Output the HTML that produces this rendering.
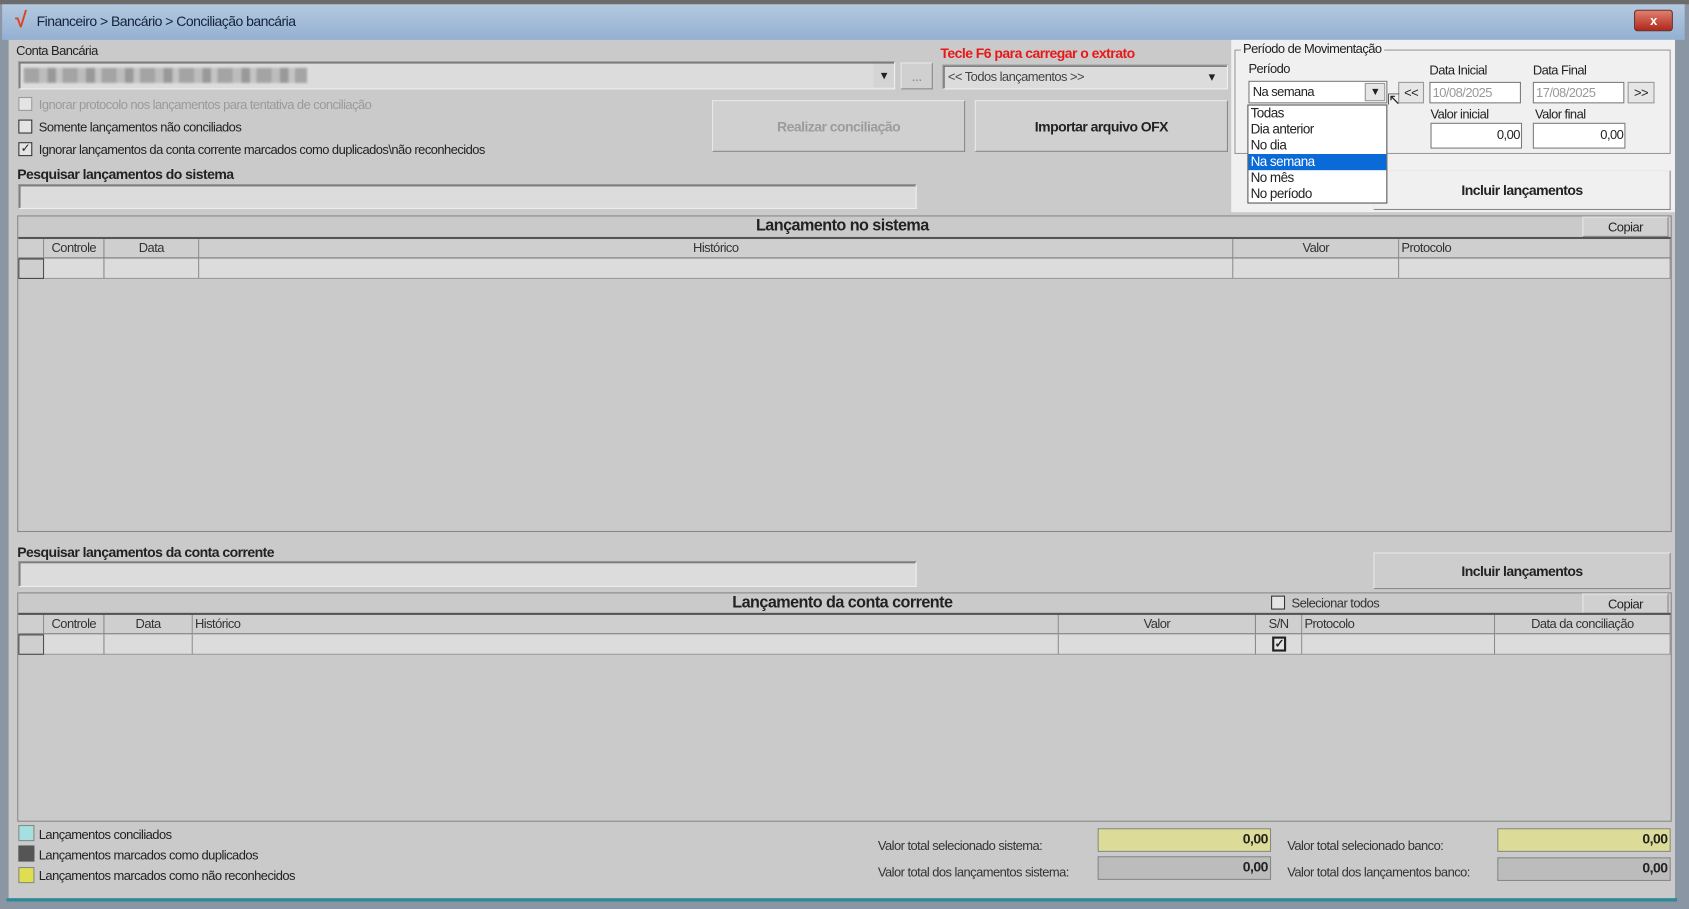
<!DOCTYPE html>
<html><head><meta charset="utf-8"><style>
*{box-sizing:border-box;margin:0;padding:0}
html,body{width:1689px;height:909px;overflow:hidden;background:#6b6b6b}
#w{position:absolute;left:0;top:0;width:1568px;height:844px;transform-origin:0 0;transform:scale(1.07717,1.07701);font-family:"Liberation Sans",sans-serif;font-size:12px;color:#222;letter-spacing:-0.5px}
.a{position:absolute;white-space:nowrap}
.in{position:absolute;background:#dcdcdc;border:1px solid #8a8a8a;border-right-color:#eee;border-bottom-color:#eee;box-shadow:inset 1px 1px 0 #666}
.btn{position:absolute;background:#d0d0d0;border:1px solid #e8e8e8;border-right-color:#888;border-bottom-color:#888;display:flex;align-items:center;justify-content:center;font-weight:bold;font-size:13px}
.cb{position:absolute;width:13px;height:13px;border:1px solid #333;background:#e4e4e4}
.b{font-weight:bold}
.hd{position:absolute;height:18px;border-right:1px solid #888;border-bottom:1px solid #777;background:#cfcfcf;line-height:17px;text-align:center;color:#333}
.rw{position:absolute;height:19px;border-right:1px solid #888;border-bottom:1px solid #999;background:#dcdcdc}
.wi{position:absolute;background:#fff;border:1px solid #7a7a7a}
.sb{position:absolute;background:#e6e6e6;border:1px solid #999;display:flex;align-items:center;justify-content:center}
</style></head><body><div id="w">
<div class="a" style="left:0;top:4px;width:1568px;height:840px;background:#8a96a4"></div>
<div class="a" style="left:2px;top:4px;width:1562px;height:33px;background:linear-gradient(#b5c9e0,#93b0d2)"></div>
<div class="a" style="left:14px;top:8px;color:#e0401a;font-size:20px;font-weight:bold">√</div>
<div class="a" style="left:34px;top:12px;font-size:13px;color:#13233a">Financeiro &gt; Bancário &gt; Conciliação bancária</div>
<div class="a" style="left:1517px;top:9px;width:36px;height:20px;background:linear-gradient(#e08070,#b0281a);border:1px solid #6a2a20;border-radius:3px;color:#fff;text-align:center;font-weight:bold;line-height:18px">x</div>
<div class="a" style="left:8px;top:37px;width:1547px;height:797px;background:#cacaca"></div>
<div class="a" style="left:6px;top:834px;width:1551px;height:3px;background:#2e8a9a"></div>

<div class="a" style="left:15px;top:40px">Conta Bancária</div>
<div class="in" style="left:17px;top:57px;width:814px;height:26px"></div>
<div class="a" style="left:22px;top:63px;width:263px;height:14px;background:repeating-linear-gradient(90deg,#a4a4a4 0 14px,#bcbcbc 14px 22px,#999 22px 30px,#c4c4c4 30px 36px);filter:blur(1px)"></div>
<div class="sb" style="left:811px;top:59px;width:19px;height:22px;background:#d4d4d4;border:none">▾</div>
<div class="btn" style="left:836px;top:58px;width:30px;height:25px;font-weight:normal;color:#888">...</div>
<div class="a b" style="left:873px;top:42px;color:#e81818;font-size:13px">Tecle F6 para carregar o extrato</div>
<div class="in" style="left:875px;top:60px;width:265px;height:23px"></div>
<div class="a" style="left:880px;top:64px;color:#444">&lt;&lt; Todos lançamentos &gt;&gt;</div>
<div class="a" style="left:1122px;top:64px">▾</div>

<div class="cb" style="left:17px;top:90px;border-color:#999"></div>
<div class="a" style="left:36px;top:90px;color:#9a9a9a">Ignorar protocolo nos lançamentos para tentativa de conciliação</div>
<div class="cb" style="left:17px;top:111px"></div>
<div class="a" style="left:36px;top:111px">Somente lançamentos não conciliados</div>
<div class="cb" style="left:17px;top:132px;font-size:11px;line-height:11px;text-align:center">✓</div>
<div class="a" style="left:36px;top:132px">Ignorar lançamentos da conta corrente marcados como duplicados\não reconhecidos</div>

<div class="btn" style="left:661px;top:93px;width:235px;height:48px;color:#9c9c9c">Realizar conciliação</div>
<div class="btn" style="left:905px;top:93px;width:235px;height:48px">Importar arquivo OFX</div>

<div class="a b" style="left:16px;top:154px;font-size:13px">Pesquisar lançamentos do sistema</div>
<div class="in" style="left:17px;top:171px;width:834px;height:23px"></div>

<div class="a" style="left:1143px;top:37px;width:412px;height:160px;background:#f0f0f0"></div>
<div class="a" style="left:1146px;top:46px;width:405px;height:97px;border:1px solid #999"></div>
<div class="a" style="left:1152px;top:38px;background:#f0f0f0;padding:0 2px">Período de Movimentação</div>
<div class="a" style="left:1159px;top:57px">Período</div>
<div class="wi" style="left:1159px;top:75px;width:129px;height:21px"></div>
<div class="a" style="left:1163px;top:78px">Na semana</div>
<div class="sb" style="left:1267px;top:77px;width:19px;height:17px;font-size:10px">▼</div>
<div class="sb" style="left:1298px;top:76px;width:24px;height:20px">&lt;&lt;</div>
<div class="a" style="left:1327px;top:58px">Data Inicial</div>
<div class="a" style="left:1423px;top:58px">Data Final</div>
<div class="wi" style="left:1327px;top:76px;width:85px;height:20px;color:#999;padding:2px 2px">10/08/2025</div>
<div class="wi" style="left:1423px;top:76px;width:85px;height:20px;color:#999;padding:2px 2px">17/08/2025</div>
<div class="sb" style="left:1511px;top:76px;width:25px;height:20px">&gt;&gt;</div>
<div class="a" style="left:1328px;top:99px">Valor inicial</div>
<div class="a" style="left:1425px;top:99px">Valor final</div>
<div class="wi" style="left:1328px;top:114px;width:85px;height:24px;text-align:right;padding:3px 1px">0,00</div>
<div class="wi" style="left:1423px;top:114px;width:86px;height:24px;text-align:right;padding:3px 1px">0,00</div>
<div class="btn" style="left:1275px;top:158px;width:276px;height:37px;background:#f0f0f0">Incluir lançamentos</div>
<div class="a" style="left:1158px;top:97px;width:130px;height:92px;background:#fff;border:1px solid #555;line-height:15px;font-size:12.5px">
<div style="padding-left:2px">Todas</div><div style="padding-left:2px">Dia anterior</div><div style="padding-left:2px">No dia</div><div style="padding-left:2px;background:#0a6ad8;color:#fff">Na semana</div><div style="padding-left:2px">No mês</div><div style="padding-left:2px">No período</div></div>
<div class="a" style="left:1288px;top:84px;font-size:14px;color:#222">⇱</div>

<div class="a" style="left:16px;top:200px;width:1536px;height:294px;border:1px solid #888"></div>
<div class="a b" style="left:16px;top:201px;width:1532px;text-align:center;font-size:15px">Lançamento no sistema</div>
<div class="btn" style="left:1469px;top:201px;width:80px;height:19px;font-weight:normal;font-size:12px">Copiar</div>
<div class="a" style="left:17px;top:220px;width:1534px;height:2px;background:#555"></div>
<div class="hd" style="left:17px;top:222px;width:24px"></div>
<div class="hd" style="left:41px;top:222px;width:56px">Controle</div>
<div class="hd" style="left:97px;top:222px;width:88px">Data</div>
<div class="hd" style="left:185px;top:222px;width:960px">Histórico</div>
<div class="hd" style="left:1145px;top:222px;width:154px">Valor</div>
<div class="hd" style="left:1299px;top:222px;width:252px;text-align:left;padding-left:2px">Protocolo</div>
<div class="rw" style="left:17px;top:240px;width:24px;background:#cfcfcf;border:1px solid #444"></div>
<div class="rw" style="left:41px;top:240px;width:56px"></div>
<div class="rw" style="left:97px;top:240px;width:88px"></div>
<div class="rw" style="left:185px;top:240px;width:960px"></div>
<div class="rw" style="left:1145px;top:240px;width:154px"></div>
<div class="rw" style="left:1299px;top:240px;width:252px"></div>

<div class="a b" style="left:16px;top:505px;font-size:13px">Pesquisar lançamentos da conta corrente</div>
<div class="in" style="left:17px;top:521px;width:834px;height:24px"></div>
<div class="btn" style="left:1275px;top:513px;width:276px;height:34px;background:#cdcdcd">Incluir lançamentos</div>

<div class="a" style="left:16px;top:550px;width:1536px;height:213px;border:1px solid #888"></div>
<div class="a b" style="left:16px;top:551px;width:1532px;text-align:center;font-size:15px">Lançamento da conta corrente</div>
<div class="cb" style="left:1180px;top:553px"></div>
<div class="a" style="left:1199px;top:553px;color:#333">Selecionar todos</div>
<div class="btn" style="left:1469px;top:551px;width:80px;height:19px;font-weight:normal;font-size:12px">Copiar</div>
<div class="a" style="left:17px;top:569px;width:1534px;height:2px;background:#555"></div>
<div class="hd" style="left:17px;top:571px;width:24px"></div>
<div class="hd" style="left:41px;top:571px;width:56px">Controle</div>
<div class="hd" style="left:97px;top:571px;width:82px">Data</div>
<div class="hd" style="left:179px;top:571px;width:804px;text-align:left;padding-left:2px">Histórico</div>
<div class="hd" style="left:983px;top:571px;width:183px">Valor</div>
<div class="hd" style="left:1166px;top:571px;width:43px">S/N</div>
<div class="hd" style="left:1209px;top:571px;width:179px;text-align:left;padding-left:2px">Protocolo</div>
<div class="hd" style="left:1388px;top:571px;width:163px">Data da conciliação</div>
<div class="rw" style="left:17px;top:589px;width:24px;background:#cfcfcf;border:1px solid #444"></div>
<div class="rw" style="left:41px;top:589px;width:56px"></div>
<div class="rw" style="left:97px;top:589px;width:82px"></div>
<div class="rw" style="left:179px;top:589px;width:804px"></div>
<div class="rw" style="left:983px;top:589px;width:183px"></div>
<div class="rw" style="left:1166px;top:589px;width:43px"></div>
<div class="rw" style="left:1209px;top:589px;width:179px"></div>
<div class="rw" style="left:1388px;top:589px;width:163px"></div>
<div class="cb" style="left:1181px;top:591px;width:13px;height:14px;border:2px solid #222;font-size:11px;line-height:10px;text-align:center;font-weight:bold">✓</div>

<div class="a" style="left:17px;top:766px;width:15px;height:15px;background:#a6dfe0;border:1px solid #888"></div>
<div class="a" style="left:36px;top:768px">Lançamentos conciliados</div>
<div class="a" style="left:17px;top:785px;width:15px;height:15px;background:#555"></div>
<div class="a" style="left:36px;top:787px">Lançamentos marcados como duplicados</div>
<div class="a" style="left:17px;top:805px;width:15px;height:15px;background:#dede50;border:1px solid #888"></div>
<div class="a" style="left:36px;top:806px">Lançamentos marcados como não reconhecidos</div>

<div class="a" style="left:815px;top:778px;color:#333">Valor total selecionado sistema:</div>
<div class="a" style="left:815px;top:803px;color:#333">Valor total dos lançamentos sistema:</div>
<div class="a b" style="left:1019px;top:769px;width:161px;height:22px;background:#dcdc98;border:1px solid #888;text-align:right;padding:1px 2px;font-size:13px">0,00</div>
<div class="a b" style="left:1019px;top:795px;width:161px;height:22px;background:#bcbcbc;border:1px solid #888;text-align:right;padding:1px 2px;font-size:13px">0,00</div>
<div class="a" style="left:1195px;top:778px;color:#333">Valor total selecionado banco:</div>
<div class="a" style="left:1195px;top:803px;color:#333">Valor total dos lançamentos banco:</div>
<div class="a b" style="left:1390px;top:769px;width:161px;height:22px;background:#dcdc98;border:1px solid #888;text-align:right;padding:1px 2px;font-size:13px">0,00</div>
<div class="a b" style="left:1390px;top:796px;width:161px;height:22px;background:#bcbcbc;border:1px solid #888;text-align:right;padding:1px 2px;font-size:13px">0,00</div>
</div></body></html>
